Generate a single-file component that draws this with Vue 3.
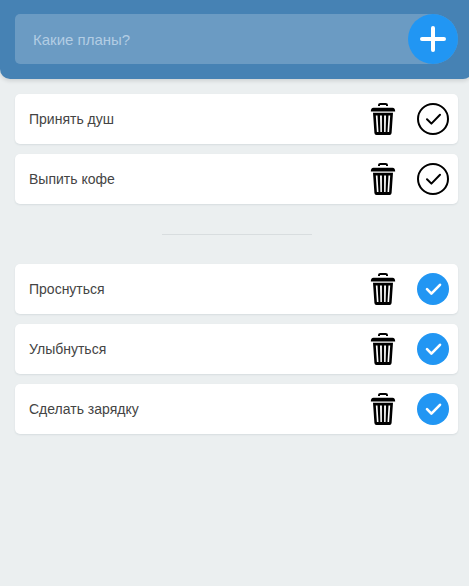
<script setup>
import { computed, ref } from 'vue'

const draft = ref('')
const tasks = ref([
  { id: 1, text: 'Принять душ', done: false },
  { id: 2, text: 'Выпить кофе', done: false },
  { id: 3, text: 'Проснуться', done: true },
  { id: 4, text: 'Улыбнуться', done: true },
  { id: 5, text: 'Сделать зарядку', done: true }
])
const groups = computed(() => [
  { name: 'todo', items: tasks.value.filter((t) => !t.done) },
  { name: 'completed', items: tasks.value.filter((t) => t.done) }
])

function add() {
  const text = draft.value.trim()
  if (!text) return
  tasks.value.unshift({ id: Date.now(), text, done: false })
  draft.value = ''
}

function remove(id) {
  tasks.value = tasks.value.filter((t) => t.id !== id)
}
</script>

<template>
  <div class="page">
    <header class="header">
      <form class="entry" @submit.prevent="add">
        <input v-model="draft" class="field" type="text" placeholder="Какие планы?" aria-label="Какие планы?" />
        <button class="add" type="submit" aria-label="Добавить">
          <svg viewBox="0 0 50 50" width="50" height="50" aria-hidden="true">
            <path d="M25 14V36M14 25H36" fill="none" stroke="#fff" stroke-width="4" stroke-linecap="round" />
          </svg>
        </button>
      </form>
    </header>
    <main class="main">
      <ul v-for="group in groups" :key="group.name" class="list">
        <li v-for="task in group.items" :key="task.id" class="item">
          <span class="text">{{ task.text }}</span>
          <button class="icon" type="button" aria-label="Удалить" @click="remove(task.id)">
            <svg viewBox="0 0 32 32" width="32" height="32" aria-hidden="true">
              <path d="M12 3V2Q12 1 13.4 1H18.6Q20 1 20 2V3" fill="none" stroke="#000" stroke-width="2" />
              <path d="M6.5 4.8H25.5Q28.2 4.8 28.2 8.6H3.8Q3.8 4.8 6.5 4.8Z" />
              <path
                fill-rule="evenodd"
                d="M6 9.8H26L24.6 30Q24.4 32 22.6 32H9.4Q7.6 32 7.4 30ZM8.8 12.5L9.9 29H11.5L10.5 12.5ZM13 12.5L13.4 29H14.9V12.5ZM17.1 12.5V29H18.6L19 12.5ZM21.5 12.5L20.5 29H22.1L23.2 12.5Z"
              />
            </svg>
          </button>
          <button
            class="icon"
            type="button"
            aria-label="Выполнено"
            :aria-pressed="task.done"
            @click="task.done = !task.done"
          >
            <svg viewBox="0 0 32 32" width="32" height="32" aria-hidden="true" fill="none">
              <circle v-if="task.done" cx="16" cy="16" r="16" fill="#2196f3" />
              <circle v-else cx="16" cy="16" r="15" stroke="#000" stroke-width="2" />
              <path
                d="M10 16.2L14.4 20.6L23 11.8"
                :stroke="task.done ? '#fff' : '#000'"
                :stroke-width="task.done ? 2.6 : 2"
                stroke-linecap="round"
                stroke-linejoin="round"
              />
            </svg>
          </button>
        </li>
      </ul>
    </main>
  </div>
</template>

<style>
body {
  background: #ebeff0;
  overflow-x: hidden;
}
</style>

<style scoped>
.page {
  box-sizing: border-box;
  width: calc(100% + 4px);
  font-family: "Liberation Sans", Arial, sans-serif;
}

.header {
  padding: 14px 15px 15px;
  background: #4682b4;
  border-radius: 0 0 10px 10px;
  box-shadow: 0 2px 4px rgba(0, 0, 0, 0.12);
}

.entry {
  display: flex;
  height: 50px;
  background: rgba(255, 255, 255, 0.2);
  border-radius: 5px 25px 25px 5px;
}

.field {
  flex: 1;
  min-width: 0;
  padding: 0 18px;
  border: 0;
  outline: 0;
  background: transparent;
  color: #fff;
  font: 15px "Liberation Sans", Arial, sans-serif;
}

.field::placeholder {
  color: #b3cde3;
  opacity: 1;
}

.add {
  width: 50px;
  height: 50px;
  padding: 0;
  border: 0;
  border-radius: 50%;
  background: #2196f3;
  cursor: pointer;
}

.add svg,
.icon svg {
  display: block;
}

.main {
  padding: 15px;
}

.list {
  display: flex;
  flex-direction: column;
  gap: 10px;
  margin: 0;
  padding: 0;
  list-style: none;
}

.list + .list::before {
  content: "";
  width: 150px;
  height: 1px;
  margin: 30px auto 19px;
  background: #d8dddf;
}

.item {
  display: flex;
  align-items: center;
  gap: 18px;
  height: 50px;
  padding: 0 9px 0 14px;
  box-sizing: border-box;
  background: #fff;
  border-radius: 5px;
  box-shadow: 0 1px 2px rgba(44, 62, 80, 0.1);
}

.text {
  flex: 1;
  min-width: 0;
  color: #444;
  font-size: 14px;
  line-height: 20px;
}

.icon {
  flex: none;
  padding: 0;
  border: 0;
  background: none;
  cursor: pointer;
}
</style>
